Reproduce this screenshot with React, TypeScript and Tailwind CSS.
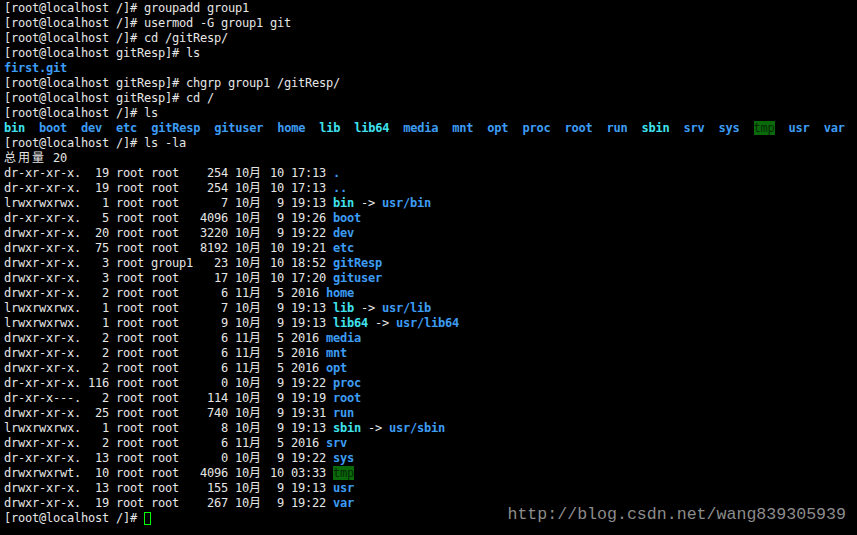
import React from 'react';

type Kind = 'n' | 'd' | 'l' | 't';
type Seg = [string, Kind];

const kindClass: Record<Kind, string> = {
  n: 'text-[#e6e6e6]',
  d: 'text-[#3d9cf4] font-bold',
  l: 'text-[#3fe2ee] font-bold',
  t: 'text-[#062a06] bg-[#0a6a0a]',
};

const prompt = (dir: string, cmd: string): Seg[] => [[`[root@localhost ${dir}]# ${cmd}`, 'n']];

const lsNames: Seg[] = [];
[
  ['bin', 'l'], ['boot', 'd'], ['dev', 'd'], ['etc', 'd'], ['gitResp', 'd'], ['gituser', 'd'],
  ['home', 'd'], ['lib', 'l'], ['lib64', 'l'], ['media', 'd'], ['mnt', 'd'], ['opt', 'd'],
  ['proc', 'd'], ['root', 'd'], ['run', 'd'], ['sbin', 'l'], ['srv', 'd'], ['sys', 'd'],
  ['tmp', 't'], ['usr', 'd'], ['var', 'd'],
].forEach(([name, kind], i) => {
  if (i > 0) lsNames.push(['  ', 'n']);
  lsNames.push([name, kind as Kind]);
});

// perm, links, group, size, month, day, time, name segments
const entries: [string, string, string, string, string, string, string, Seg[]][] = [
  ['dr-xr-xr-x.', '19', 'root', '254', '10月', '10', '17:13', [['.', 'd']]],
  ['dr-xr-xr-x.', '19', 'root', '254', '10月', '10', '17:13', [['..', 'd']]],
  ['lrwxrwxrwx.', '1', 'root', '7', '10月', '9', '19:13', [['bin', 'l'], [' -> ', 'n'], ['usr/bin', 'd']]],
  ['dr-xr-xr-x.', '5', 'root', '4096', '10月', '9', '19:26', [['boot', 'd']]],
  ['drwxr-xr-x.', '20', 'root', '3220', '10月', '9', '19:22', [['dev', 'd']]],
  ['drwxr-xr-x.', '75', 'root', '8192', '10月', '10', '19:21', [['etc', 'd']]],
  ['drwxr-xr-x.', '3', 'group1', '23', '10月', '10', '18:52', [['gitResp', 'd']]],
  ['drwxr-xr-x.', '3', 'root', '17', '10月', '10', '17:20', [['gituser', 'd']]],
  ['drwxr-xr-x.', '2', 'root', '6', '11月', '5', '2016', [['home', 'd']]],
  ['lrwxrwxrwx.', '1', 'root', '7', '10月', '9', '19:13', [['lib', 'l'], [' -> ', 'n'], ['usr/lib', 'd']]],
  ['lrwxrwxrwx.', '1', 'root', '9', '10月', '9', '19:13', [['lib64', 'l'], [' -> ', 'n'], ['usr/lib64', 'd']]],
  ['drwxr-xr-x.', '2', 'root', '6', '11月', '5', '2016', [['media', 'd']]],
  ['drwxr-xr-x.', '2', 'root', '6', '11月', '5', '2016', [['mnt', 'd']]],
  ['drwxr-xr-x.', '2', 'root', '6', '11月', '5', '2016', [['opt', 'd']]],
  ['dr-xr-xr-x.', '116', 'root', '0', '10月', '9', '19:22', [['proc', 'd']]],
  ['dr-xr-x---.', '2', 'root', '114', '10月', '9', '19:19', [['root', 'd']]],
  ['drwxr-xr-x.', '25', 'root', '740', '10月', '9', '19:31', [['run', 'd']]],
  ['lrwxrwxrwx.', '1', 'root', '8', '10月', '9', '19:13', [['sbin', 'l'], [' -> ', 'n'], ['usr/sbin', 'd']]],
  ['drwxr-xr-x.', '2', 'root', '6', '11月', '5', '2016', [['srv', 'd']]],
  ['dr-xr-xr-x.', '13', 'root', '0', '10月', '9', '19:22', [['sys', 'd']]],
  ['drwxrwxrwt.', '10', 'root', '4096', '10月', '10', '03:33', [['tmp', 't']]],
  ['drwxr-xr-x.', '13', 'root', '155', '10月', '9', '19:13', [['usr', 'd']]],
  ['drwxr-xr-x.', '19', 'root', '267', '10月', '9', '19:22', [['var', 'd']]],
];

const lines: Seg[][] = [
  prompt('/', 'groupadd group1'),
  prompt('/', 'usermod -G group1 git'),
  prompt('/', 'cd /gitResp/'),
  prompt('gitResp', 'ls'),
  [['first.git', 'd']],
  prompt('gitResp', 'chgrp group1 /gitResp/'),
  prompt('gitResp', 'cd /'),
  prompt('/', 'ls'),
  lsNames,
  prompt('/', 'ls -la'),
  [['总用量 20', 'n']],
  ...entries.map(([perm, links, group, size, month, day, time, name]) => {
    const head = `${perm} ${links.padStart(3)} root ${group.padEnd(6)} ${size.padStart(4)} ${month} ${day.padStart(2)} ${time} `;
    return [[head, 'n'] as Seg, ...name];
  }),
];

// CJK glyphs take two terminal cells: 12px glyph + 2px spacing
const Text: React.FC<{ text: string }> = ({ text }) => (
  <>
    {text.split(/([\u4e00-\u9fff]+)/).map((part, i) =>
      i % 2 === 1 ? (
        <span key={i} className="font-['Noto_Sans_CJK_SC',sans-serif] tracking-[2px] leading-[12px]">
          {part}
        </span>
      ) : (
        part
      )
    )}
  </>
);

export default function App() {
  return (
    <div className="relative w-[857px] h-[535px] bg-black overflow-hidden pl-[4px] pt-[1px] font-['DejaVu_Sans_Mono',monospace] text-[12px] tracking-[-0.224px] whitespace-pre">
      {lines.map((segs, i) => (
        <div key={i} className="h-[15px] leading-[15px]">
          {segs.map(([t, k], j) => (
            <span key={j} className={kindClass[k]}>
              <Text text={t} />
            </span>
          ))}
        </div>
      ))}
      <div className="h-[15px] leading-[15px] flex items-center">
        <span className={kindClass.n}>[root@localhost /]# </span>
        <span className="inline-block w-[7px] h-[13px] border border-[#00ff00]" />
      </div>
      <div className="absolute right-[11px] top-[505px] font-['Liberation_Mono',monospace] text-[16.6px] tracking-normal text-[#8c8c8c] leading-[20px]">
        http://blog.csdn.net/wang839305939
      </div>
    </div>
  );
}
